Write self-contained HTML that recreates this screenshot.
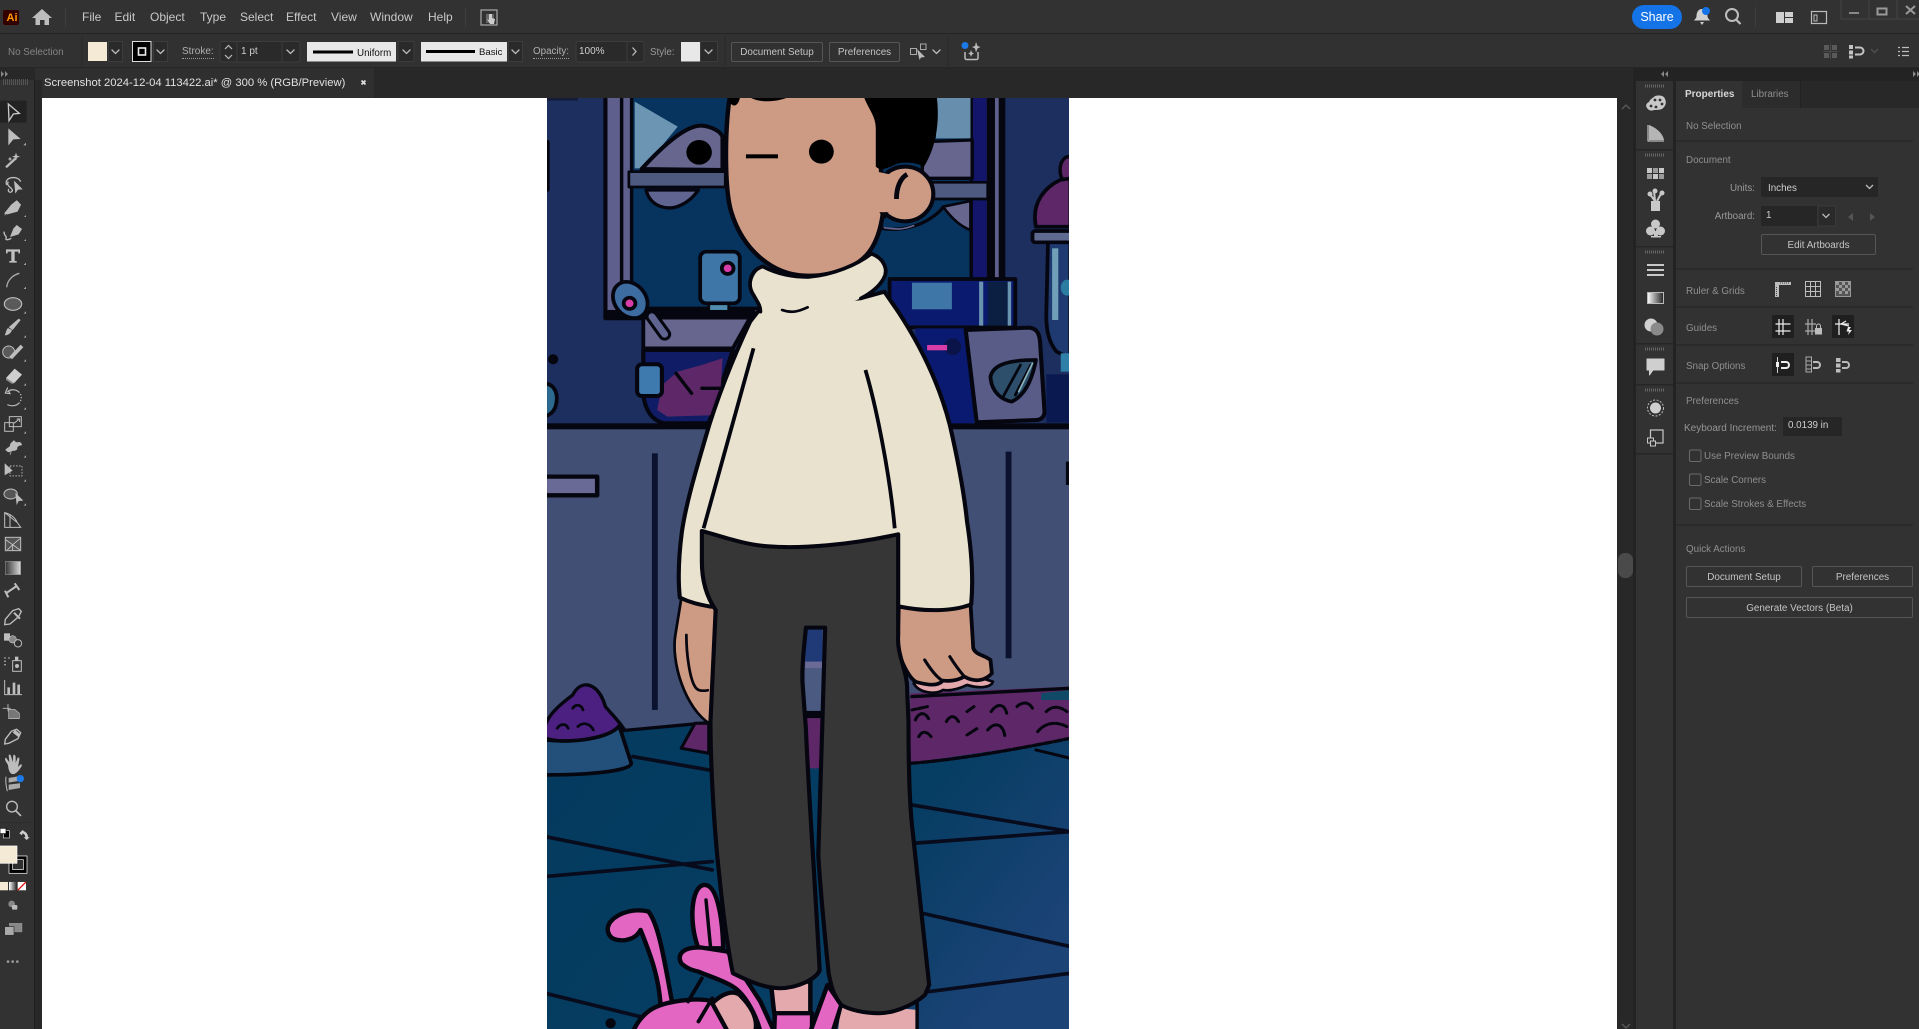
<!DOCTYPE html>
<html><head><meta charset="utf-8"><title>Illustrator</title>
<style>
html,body{margin:0;padding:0;width:1919px;height:1029px;overflow:hidden;background:#323232}
#r{position:relative;width:1919px;height:1029px;overflow:hidden;font-family:"Liberation Sans",sans-serif}
.b{position:absolute}
.t{position:absolute;white-space:nowrap;line-height:14px;height:14px;font-size:9.8px;color:#9a9a9a}
.w{color:#cfcfcf}
.btn{position:absolute;box-sizing:border-box;border:1px solid #565656;border-radius:2px;text-align:center;color:#c4c4c4;font-size:9.9px;white-space:nowrap}
.d{border-bottom:1px dotted #999;line-height:12px;height:12px;font-size:10px}
.m{font-size:12px;color:#c9c9c9}
svg{position:absolute;left:0;top:0}
</style></head><body><div id="r">
<!-- chrome backgrounds -->
<div class="b" style="left:0;top:0;width:1919px;height:34px;background:#323232;border-bottom:1px solid #232323;box-sizing:border-box"></div>
<div class="b" style="left:0;top:34px;width:1919px;height:34px;background:#313131;border-bottom:1px solid #262626;box-sizing:border-box"></div>
<div class="b" style="left:0;top:68px;width:1919px;height:30px;background:#282828"></div>
<div class="b" style="left:35px;top:68px;width:339px;height:30px;background:#2f2f2f"></div>
<div class="b" style="left:0;top:80px;width:34px;height:949px;background:#323232"></div>
<div class="b" style="left:34px;top:80px;width:8px;height:949px;background:#282828;border-left:1px solid #1f1f1f;box-sizing:border-box"></div>
<div class="b" style="left:42px;top:98px;width:1575px;height:931px;background:#fff"></div>
<div class="b" style="left:1617px;top:98px;width:16px;height:931px;background:#282828"></div>
<div class="b" style="left:1618px;top:553px;width:15px;height:25px;border-radius:7px;background:#4a4a4a"></div>
<div class="b" style="left:1633px;top:68px;width:286px;height:961px;background:#232323"></div>
<div class="b" style="left:1636px;top:81px;width:37px;height:948px;background:#323232"></div>
<div class="b" style="left:1676px;top:81px;width:243px;height:27px;background:#282828"></div>
<div class="b" style="left:1676px;top:81px;width:66px;height:27px;background:#323232"></div>
<div class="b" style="left:1742px;top:81px;width:58px;height:27px;background:#2c2c2c;border-right:1px solid #222"></div>
<div class="b" style="left:1676px;top:108px;width:243px;height:921px;background:#323232"></div>
<!-- separators in panel -->
<div class="b" style="left:1676px;top:140px;width:237px;height:2px;background:#2a2a2a"></div>
<div class="b" style="left:1676px;top:268px;width:237px;height:2px;background:#2a2a2a"></div>
<div class="b" style="left:1676px;top:306px;width:237px;height:2px;background:#2a2a2a"></div>
<div class="b" style="left:1676px;top:344px;width:237px;height:2px;background:#2a2a2a"></div>
<div class="b" style="left:1676px;top:382px;width:237px;height:2px;background:#2a2a2a"></div>
<div class="b" style="left:1676px;top:524px;width:237px;height:2px;background:#2a2a2a"></div>

<!-- ARTWORK -->
<svg width="1919" height="1029" viewBox="0 0 1919 1029">
<defs>
<clipPath id="art"><rect x="547" y="98" width="522" height="931"/></clipPath>
<linearGradient id="fl" x1="0" y1="0" x2="1" y2="0.5"><stop offset="0" stop-color="#033a5e"/><stop offset=".65" stop-color="#063d62"/><stop offset="1" stop-color="#1b4376"/></linearGradient>
</defs>
<g clip-path="url(#art)"><g transform="translate(540,95) scale(.3444,.3333)" stroke-linejoin="round" stroke-linecap="round" style="filter:blur(.4px)">
<!-- wall up -->
<rect x="0" y="0" width="1568" height="1000" fill="#1d2f5f"/>
<!-- lower wall -->
<rect x="0" y="990" width="1568" height="930" fill="#414f74"/>
<rect x="0" y="985" width="1568" height="18" fill="#05060f"/>
<!-- floor -->
<path d="M0 1925L260 1905L500 1885L1568 1885L1568 2920L0 2920Z" fill="url(#fl)"/>
<path d="M250 1906L480 1884" stroke="#05060f" stroke-width="10" fill="none"/>
<!-- window -->
<rect x="190" y="-20" width="1155" height="690" fill="#5e5f8c" stroke="#05060f" stroke-width="12"/>
<rect x="232" y="0" width="10" height="665" fill="#05060f"/>
<rect x="1255" y="0" width="42" height="660" fill="#12156a"/>
<rect x="1297" y="0" width="24" height="660" fill="#05060f"/>
<rect x="1332" y="0" width="14" height="660" fill="#05060f"/>
<rect x="266" y="0" width="986" height="640" fill="#07345f" stroke="#05060f" stroke-width="10"/>
<path d="M275 20L400 95L300 220L275 220Z" fill="#6b95b2"/>
<path d="M1150 0L1250 0L1250 130L1150 130Z" fill="#678fad"/>
<path d="M295 222C350 160 420 90 470 92C500 95 525 110 530 125L530 225Z" fill="#66668f" stroke="#05060f" stroke-width="12"/>
<circle cx="462" cy="172" r="37" fill="#000"/>
<path d="M1110 140L1255 135L1255 250L1110 250Z" fill="#66668f" stroke="#05060f" stroke-width="10"/>
<rect x="258" y="230" width="280" height="46" fill="#4f5a80" stroke="#05060f" stroke-width="8"/>
<rect x="1120" y="262" width="180" height="50" fill="#4f5a80" stroke="#05060f" stroke-width="8"/>
<path d="M308 285C320 335 370 350 410 330C435 318 450 300 460 285Z" fill="#5f6490" stroke="#05060f" stroke-width="10"/>
<path d="M1170 335C1195 370 1220 395 1250 405L1250 318Z" fill="#66668f" stroke="#05060f" stroke-width="8"/>
<path d="M995 400C1060 412 1130 385 1170 338" fill="none" stroke="#05060f" stroke-width="10"/>
<path d="M1000 398C1040 405 1060 402 1085 392" fill="none" stroke="#66668f" stroke-width="5"/>
<!-- bottle -->
<rect x="490" y="620" width="58" height="32" fill="#4f8cae" stroke="#05060f" stroke-width="8"/>
<rect x="465" y="470" width="115" height="155" rx="18" fill="#3f76a8" stroke="#05060f" stroke-width="11"/>
<circle cx="545" cy="520" r="17" fill="#d63da6" stroke="#05060f" stroke-width="11"/>
<!-- shelf -->
<rect x="185" y="645" width="440" height="24" fill="#05060f"/>
<path d="M300 668L610 668L560 760L300 760Z" fill="#66668f" stroke="#05060f" stroke-width="11"/>
<path d="M300 765L560 765L490 985L360 985C320 975 305 940 300 900Z" fill="#101d66" stroke="#05060f" stroke-width="12"/>
<path d="M340 945L355 870L400 830L470 810L530 790L520 960L370 965Z" fill="#5e2767"/>
<path d="M395 835L440 895M470 880L520 880" stroke="#05060f" stroke-width="10" fill="none"/>
<rect x="282" y="808" width="72" height="95" rx="14" fill="#3f7aae" stroke="#05060f" stroke-width="12"/>
<path d="M325 665L362 718" stroke="#05060f" stroke-width="38"/>
<path d="M325 665L362 718" stroke="#5f6490" stroke-width="20"/>
<ellipse cx="262" cy="615" rx="46" ry="58" transform="rotate(-35 262 615)" fill="#3d6ca0" stroke="#05060f" stroke-width="11"/>
<circle cx="260" cy="625" r="17" fill="#d63da6" stroke="#05060f" stroke-width="11"/>
<!-- left edge -->
<circle cx="38" cy="793" r="15" fill="#05060f"/>
<path d="M15 865C45 870 55 900 45 935C38 955 25 960 15 965Z" fill="#2d6a90" stroke="#05060f" stroke-width="11"/>
<rect x="14" y="135" width="14" height="155" rx="6" fill="#05060f"/>
<rect x="20" y="5" width="90" height="12" fill="#141c3a"/>
<!-- right books -->
<rect x="1015" y="552" width="365" height="145" fill="#0a1a6e" stroke="#05060f" stroke-width="11"/>
<rect x="1080" y="563" width="116" height="80" fill="#3f76a8"/>
<rect x="1275" y="560" width="12" height="132" fill="#6a93b0"/>
<rect x="1300" y="560" width="58" height="132" fill="#0a1f42"/>
<rect x="1358" y="560" width="10" height="132" fill="#6a93b0"/>
<rect x="1090" y="700" width="170" height="285" fill="#0a1a70"/>
<circle cx="1198" cy="755" r="25" fill="#0b1448"/>
<rect x="1124" y="750" width="58" height="16" fill="#d63da6"/>
<path d="M1236 705L1420 698C1445 700 1450 720 1452 740L1465 950C1465 965 1455 975 1440 975L1268 982Z" fill="#5a5c88" stroke="#05060f" stroke-width="12"/>
<path d="M1308 845C1315 815 1345 795 1440 795C1430 850 1410 900 1370 920C1340 915 1310 890 1308 845Z" fill="#2d4f6c" stroke="#05060f" stroke-width="11"/>
<path d="M1345 905L1395 810M1380 900L1425 810" stroke="#05060f" stroke-width="8"/>
<path d="M1390 890L1430 805" stroke="#8ab0b8" stroke-width="5"/>
<!-- lamp -->
<path d="M1475 440L1540 440L1540 790L1500 770C1475 740 1470 700 1470 660Z" fill="#1e3a70" stroke="#05060f" stroke-width="11"/>
<rect x="1487" y="460" width="18" height="215" fill="#6fa0b8"/>
<ellipse cx="1530" cy="578" rx="18" ry="24" fill="#2a7ca0"/>
<rect x="1512" y="775" width="30" height="55" fill="#2f80a8"/>
<rect x="1470" y="838" width="80" height="145" fill="#0a1a50"/>
<ellipse cx="1535" cy="225" rx="25" ry="40" fill="#5e2767" stroke="#05060f" stroke-width="10"/>
<path d="M1440 395C1425 320 1470 275 1510 255L1540 250L1540 395Z" fill="#5e2767" stroke="#05060f" stroke-width="11"/>
<rect x="1430" y="408" width="120" height="34" rx="8" fill="#5f6a90" stroke="#05060f" stroke-width="11"/>
<!-- lower wall bits -->
<rect x="14" y="1145" width="152" height="56" fill="#6a6a96" stroke="#05060f" stroke-width="13"/>
<rect x="325" y="1075" width="17" height="770" fill="#0a1230"/>
<rect x="1352" y="1070" width="17" height="620" fill="#0a1230"/>
<rect x="1527" y="1100" width="16" height="70" fill="#05060f"/>
<!-- rug right -->
<path d="M1075 1795L1540 1775L1540 1935C1400 1955 1200 1985 1075 2005Z" fill="#5e2767"/>
<path d="M1455 1795L1540 1785L1540 1815L1455 1815Z" fill="#104a66"/>
<path d="M1080 1805L1540 1780" stroke="#05060f" stroke-width="10" fill="none"/>
<path d="M1078 2005C1200 1995 1350 1970 1540 1930" stroke="#05060f" stroke-width="10" fill="none" stroke-dasharray="22 8"/>
<path d="M1080 1845L1125 1835M1090 1875C1100 1850 1120 1850 1130 1875M1310 1850C1330 1820 1350 1830 1355 1855M1300 1905C1320 1880 1345 1885 1350 1925M1445 1910C1470 1880 1500 1880 1530 1895M1180 1880C1190 1860 1205 1860 1215 1880M1385 1835C1400 1820 1420 1820 1430 1840M1470 1850C1490 1830 1510 1835 1530 1850M1240 1850L1260 1835M1100 1925C1110 1905 1125 1910 1135 1925M1240 1920L1270 1900" stroke="#05060f" stroke-width="9" fill="none" stroke-dasharray="14 6"/>
<path d="M1440 1965L1540 1990" stroke="#05060f" stroke-width="9" fill="none"/>
<!-- rug left -->
<path d="M490 1885L450 1885L410 1960L490 1975Z" fill="#5e2767" stroke="#05060f" stroke-width="9"/>
<!-- leg gap -->
<rect x="770" y="1590" width="50" height="110" fill="#203a78"/>
<rect x="770" y="1700" width="50" height="20" fill="#6a6a96"/>
<rect x="770" y="1720" width="50" height="128" fill="#4a5a80"/>
<rect x="770" y="1848" width="50" height="22" fill="#05060f"/>
<path d="M770 1870L830 1870L800 2025Z" fill="#5e2767"/>
<rect x="770" y="1870" width="50" height="150" fill="#5e2767"/>
<!-- bowl -->
<path d="M15 1890C30 1850 70 1820 95 1800C105 1780 120 1768 138 1770C165 1775 180 1800 190 1835C210 1860 235 1885 245 1905C200 1945 60 1945 15 1930Z" fill="#4b2080" stroke="#05060f" stroke-width="10"/>
<path d="M50 1900C60 1885 75 1885 82 1900M110 1895C125 1880 145 1885 155 1905M95 1840C105 1825 120 1830 125 1845" stroke="#05060f" stroke-width="8" fill="none"/>
<path d="M230 1893L265 2005C265 2025 170 2040 15 2040L15 1935C100 1945 200 1930 230 1893Z" fill="#23507a" stroke="#05060f" stroke-width="11"/>
<!-- floor lines -->
<g stroke="#070b1c" stroke-width="11" fill="none">
<path d="M270 1985L490 2025M15 2225L500 2325M15 2345L500 2300M1080 2130L1540 2210M1085 2245L1540 2210M1110 2455L1540 2555M1130 2690L1540 2635M15 2695L290 2765"/>
</g>
<!-- slippers -->
<g stroke="#05060f" stroke-width="13">
<path d="M350 2730C345 2650 325 2590 292 2505C280 2530 250 2540 225 2535C195 2530 190 2500 205 2480C230 2450 280 2440 315 2450C345 2490 360 2590 385 2730Z" fill="#e366c3"/>
<path d="M460 2560C430 2480 440 2370 478 2370C515 2370 530 2470 532 2560Z" fill="#e366c3"/>
<path d="M482 2415L495 2555" fill="none" stroke-width="10"/>
<path d="M270 2810C300 2740 350 2722 430 2715C520 2705 640 2760 690 2810Z" fill="#e366c3"/>
<path d="M410 2605C395 2575 420 2555 470 2558L545 2570L640 2720L680 2810L640 2810C630 2770 600 2700 560 2675C530 2655 480 2640 460 2630C440 2625 425 2620 410 2605Z" fill="#e366c3"/>
<path d="M500 2725C530 2695 560 2685 580 2700C610 2730 635 2770 625 2810L545 2810Z" fill="#e4a9ac"/>
<path d="M670 2660L785 2660L785 2755L680 2755Z" fill="#e4a9ac"/>
<path d="M682 2755L790 2755L790 2810L680 2810Z" fill="#e366c3"/>
<path d="M835 2670L875 2730L850 2810L785 2810Z" fill="#e366c3"/>
<path d="M875 2725L1095 2745L1100 2810L865 2810Z" fill="#e4a9ac" stroke-width="0"/>
<path d="M1095 2725L1095 2810M875 2730L855 2810" fill="none" stroke-width="10"/>
<path d="M430 2720L470 2650M460 2780L500 2710" fill="none" stroke-width="11"/>
</g>
<circle cx="205" cy="2785" r="15" fill="#05060f"/>
<!-- left hand -->
<path d="M410 1512L393 1620C380 1700 420 1840 495 1888L530 1888L530 1530Z" fill="#cd9a84" stroke="#05060f" stroke-width="8"/>
<path d="M425 1620C425 1680 435 1750 450 1775C458 1790 475 1788 487 1786" fill="none" stroke="#05060f" stroke-width="8"/>
<!-- right hand -->
<path d="M1085 1765C1100 1795 1150 1800 1170 1785C1200 1790 1230 1775 1240 1770C1270 1780 1310 1780 1315 1760L1220 1730L1090 1750Z" fill="#e4a9ac" stroke="#05060f" stroke-width="8"/>
<path d="M1042 1530L1038 1650C1045 1700 1075 1755 1095 1762C1125 1770 1155 1775 1170 1757C1195 1760 1215 1755 1232 1745C1265 1765 1295 1755 1312 1735L1308 1695C1290 1680 1265 1680 1258 1660L1250 1525Z" fill="#cd9a84" stroke="#05060f" stroke-width="11"/>
<path d="M1117 1695C1135 1725 1150 1745 1168 1757M1190 1685C1205 1710 1220 1730 1232 1745" fill="none" stroke="#05060f" stroke-width="9"/>
<!-- sweater -->
<path d="M640 640L610 680C560 790 510 920 480 1030C455 1120 425 1220 412 1310C402 1390 400 1450 406 1508C440 1525 470 1530 495 1535L1045 1535C1115 1550 1200 1550 1252 1528C1258 1460 1255 1380 1240 1280C1230 1180 1210 1080 1190 990C1160 870 1110 760 1040 650L1000 590L930 610Z" fill="#e9e2cf" stroke="#05060f" stroke-width="12"/>
<!-- head -->
<circle cx="1060" cy="297" r="82" fill="#cd9a84" stroke="#05060f" stroke-width="12"/>
<path d="M555 -20L990 -20L990 215L995 360C985 430 960 490 900 515C860 535 810 545 770 542C680 540 590 470 555 350C535 280 535 90 555 -20Z" fill="#cd9a84" stroke="#05060f" stroke-width="13"/>
<path d="M955 225L1025 240L1035 345L1000 352L960 350Z" fill="#cd9a84"/>
<path d="M985 352L1003 372L1012 352Z" fill="#05060f"/>
<path d="M1066 238C1045 250 1035 280 1035 312" fill="none" stroke="#05060f" stroke-width="14" stroke-linecap="butt"/>
<path d="M935 -10C950 40 975 60 975 100L975 215C990 230 1005 220 1040 205C1075 200 1095 205 1115 215C1145 165 1165 90 1150 -10Z" fill="#000"/>
<path d="M595 -5C620 25 680 25 725 5L725 -5Z M545 -5L550 20C560 40 580 35 582 -5Z" fill="#000"/>
<circle cx="817" cy="170" r="36" fill="#000"/>
<rect x="598" y="178" width="93" height="12" fill="#000"/>
<!-- collar -->
<path d="M648 514C620 530 605 570 620 600C630 625 642 635 640 650C720 680 850 650 930 610C960 595 985 570 998 545C1008 515 990 480 962 476C900 520 840 545 770 548C720 548 680 530 648 514Z" fill="#e9e2cf" stroke="none"/>
<path d="M648 514C610 525 600 570 620 600C630 620 640 630 640 650" fill="none" stroke="#05060f" stroke-width="11"/>
<path d="M650 516C680 532 720 546 780 546C850 540 920 510 962 476C1000 490 1012 525 998 550C985 575 960 595 932 610" fill="none" stroke="#05060f" stroke-width="11"/>
<path d="M703 645C730 655 750 650 777 637" fill="none" stroke="#05060f" stroke-width="8"/>
<path d="M620 760L475 1300" fill="none" stroke="#05060f" stroke-width="11" stroke-linecap="butt"/>
<path d="M945 825C975 930 1015 1130 1030 1300" fill="none" stroke="#05060f" stroke-width="11" stroke-linecap="butt"/>
<!-- pants -->
<path d="M470 1308C530 1325 590 1348 660 1354C760 1362 900 1350 1040 1318L1040 1620C1035 1680 1068 1730 1066 1785L1070 1880C1070 2000 1072 2110 1080 2190C1090 2300 1105 2420 1130 2670L1118 2700C1080 2735 1020 2755 985 2755C940 2755 900 2745 875 2730C850 2700 845 2670 838 2635C825 2500 815 2400 808 2280L820 1880L828 1598L772 1598C768 1650 760 1700 762 1760L772 1900C780 2100 795 2300 812 2625C805 2650 750 2680 695 2680C640 2678 590 2650 560 2635C545 2560 530 2440 520 2335C505 2200 495 2000 495 1880L510 1545C480 1500 470 1450 470 1400Z" fill="#363636" stroke="#05060f" stroke-width="12"/>
</g></g>

<!-- UI GRAPHICS -->
<!-- top bar -->
<rect x="3" y="10" width="16" height="15" rx="2" fill="#330000"/>
<path d="M42 9L52 18H49V25H44.5V20H40V25H35.5V18H32Z" fill="#bdbdbd"/>
<rect x="65" y="7" width="1" height="20" fill="#3e3e3e"/>
<rect x="465" y="7" width="1" height="20" fill="#3e3e3e"/>
<rect x="481" y="10" width="16" height="15" fill="none" stroke="#aaa" stroke-width="1.2"/>
<path d="M486 14h8v9h-8z" fill="#666"/><path d="M489 14v6l-2 -1 3 5h4l1 -5 -3 -1v-4z" fill="#ccc"/>
<!-- right top -->
<path d="M1702 9c-4 0-5.500 4-5.500 7 0 2-1.500 3-2.500 4.500h16c-1-1.500-2.500-2.500-2.500-4.500 0-3-1.500-7-5.500-7zM1700 22h4l-2 3z" fill="#cfcfcf"/>
<circle cx="1706" cy="11" r="4" fill="#1473e6"/>
<circle cx="1732" cy="15" r="6" fill="none" stroke="#bdbdbd" stroke-width="2"/><path d="M1736 19.500l4.500 4.500" stroke="#bdbdbd" stroke-width="2.200"/>
<rect x="1755" y="7" width="1" height="20" fill="#3e3e3e"/>
<path d="M1776 12h8v11h-8zM1785 12h8v5h-8zM1785 18h8v5h-8z" fill="#cfcfcf"/>
<rect x="1811.500" y="11.500" width="15" height="12" fill="none" stroke="#bbb" stroke-width="1.200"/><rect x="1814" y="15" width="3" height="6" fill="none" stroke="#bbb"/>
<path d="M1841 0v19h78M1869 0v19M1897 0v19" fill="none" stroke="#444"/>
<rect x="1849" y="12" width="10" height="2" fill="#888"/>
<rect x="1877.500" y="8.500" width="9" height="6" fill="none" stroke="#999" stroke-width="2"/>
<path d="M1906 6l9 8M1915 6l-9 8" stroke="#999" stroke-width="2"/>
<!-- options bar -->
<rect x="88" y="42" width="19" height="19" fill="#f4ead5"/>
<rect x="108.500" y="41.500" width="14" height="20" fill="#2a2a2a" stroke="#3c3c3c"/>
<rect x="132.500" y="41.500" width="18.500" height="20" fill="#000" stroke="#ddd"/>
<rect x="138.500" y="48" width="7" height="7" fill="none" stroke="#eee" stroke-width="1.600"/>
<rect x="153.500" y="41.500" width="14" height="20" fill="#2a2a2a" stroke="#3c3c3c"/>
<rect x="220" y="41.500" width="80" height="20.500" rx="2" fill="#2a2a2a" stroke="#3c3c3c"/>
<path d="M237 42v20M282 42v20" stroke="#3c3c3c"/>
<path d="M225 49l3.500-3.500 3.500 3.500M225 55l3.500 3.500 3.500-3.500" fill="none" stroke="#bbb" stroke-width="1.200"/>
<rect x="307" y="42" width="89" height="19.500" fill="#e8e8e8"/>
<rect x="313" y="50.500" width="40" height="3" fill="#000"/>
<rect x="398" y="41.500" width="16" height="20" fill="#2a2a2a" stroke="#3c3c3c"/>
<rect x="421" y="42" width="86" height="19.500" fill="#e8e8e8"/>
<rect x="426" y="50" width="49" height="3" fill="#000"/>
<rect x="508.500" y="41.500" width="14" height="20" fill="#2a2a2a" stroke="#3c3c3c"/>
<rect x="576" y="41.500" width="68" height="20.500" rx="2" fill="#2a2a2a" stroke="#3c3c3c"/><path d="M627 42v20" stroke="#3c3c3c"/>
<path d="M632.500 47.500l3.500 4-3.500 4" fill="none" stroke="#bbb" stroke-width="1.300"/>
<rect x="681" y="42" width="19" height="19.500" fill="#e8e8e8"/>
<rect x="700.500" y="41.500" width="17" height="20" fill="#2a2a2a" stroke="#3c3c3c"/>
<path d="M725 36v30M948 36v30M82 36v30" stroke="#2b2b2b" stroke-width="1.300"/>
<g fill="none" stroke="#bbb" stroke-width="1.300" stroke-linecap="round">
<path d="M112 50l3.500 3.500 3.500-3.500M157 50l3.500 3.500 3.500-3.500M287 50l3.500 3.500 3.500-3.500M403 50l3.500 3.500 3.500-3.500M512 50l3.500 3.500 3.500-3.500M705 50l3.500 3.500 3.500-3.500M933 50l3.500 3.500 3.500-3.500"/>
</g>
<rect x="910.500" y="48.500" width="6" height="6" fill="none" stroke="#aaa"/>
<rect x="920.500" y="44" width="5.500" height="5.500" fill="none" stroke="#aaa"/>
<path d="M917 49l8 8-4 .5-1.500 2.500z" fill="#bbb"/>
<path d="M965 52v6a1.500 1.500 0 0 0 1.500 1.500h10a1.500 1.500 0 0 0 1.500-1.500v-6" fill="none" stroke="#bbb" stroke-width="1.500"/>
<circle cx="965" cy="45.500" r="3.500" fill="#1c7ae8"/>
<path d="M976 42l1.500 4 3 1-3 1.500-1.500 4-1-4-3-1.500 3-1zM971 50l1 2.500 2 1-2 1-1 2.500-.8-2.500-2-1 2-1z" fill="#bbb"/>
<g fill="#5a5a5a"><rect x="1824" y="45" width="5" height="5"/><rect x="1832" y="45" width="5" height="5"/><rect x="1824" y="53" width="5" height="5"/><rect x="1832" y="53" width="5" height="5"/></g>
<path d="M1830.500 44v15M1823 51.500h15" stroke="#4a4a4a"/>
<g fill="#c4c4c4"><rect x="1849" y="45" width="4" height="4"/><rect x="1849" y="50.500" width="4" height="4"/><rect x="1849" y="55.500" width="4" height="3"/></g>
<path d="M1855 47.500h5a3.500 3.500 0 0 1 0 7h-5" fill="none" stroke="#c4c4c4" stroke-width="2"/>
<path d="M1871 49l3.500 3.500 3.500-3.500" fill="none" stroke="#555" stroke-width="1.200"/>
<path d="M1902 47.500h7M1902 51.500h7M1902 55.500h7M1898 47.500h2M1898 51.500h2M1898 55.500h2" stroke="#bdbdbd" stroke-width="1.200"/>
<!-- tab close -->
<path d="M361.500 80.500l4 4M365.500 80.500l-4 4" stroke="#ddd" stroke-width="1.800"/>
<!-- collapse ticks -->
<path d="M1664 71l-3 3 3 3zM1668 71l-3 3 3 3z" fill="#888"/>
<path d="M1913 71l3 3-3 3zM1917 71l3 3-3 3zM1 71l3 3-3 3zM5 71l3 3-3 3z" fill="#888"/>
<path d="M1622 109l4-4 4 4" fill="none" stroke="#5a5a5a" stroke-width="1.300"/>
<path d="M1622 1024l4 4 4-4" fill="none" stroke="#5a5a5a" stroke-width="1.300"/>

<!-- left rail tools : zoom 5 coordinates -->
<path d="M3 82h25" stroke="#555" stroke-width="6" stroke-dasharray="1 1"/>
<g transform="translate(0,90) scale(.3333)">
<rect x="0" y="32" width="80" height="66" rx="4" fill="#222"/>
<path d="M25 42L58 70 40 72 27 92Z" fill="none" stroke="#c8c8c8" stroke-width="4"/>
<path d="M25 115L62 147 40 148 25 166Z" fill="#bdbdbd"/>
<path d="M18 232L46 206" stroke="#bdbdbd" stroke-width="7"/><path d="M48 188l3 9 9 3-9 3-3 9-3-9-9-3 9-3zM30 200l2 5 5 2-5 2-2 5-2-5-5-2 5-2z" fill="#bdbdbd"/>
<path d="M20 285c-10-25 35-30 42-10M25 275c-10 15 20 20 10 30-6 5-14-3-8-8" fill="none" stroke="#bdbdbd" stroke-width="4"/><path d="M42 272l26 26-14 1-8 12z" fill="#bdbdbd"/>
<path d="M50 332l12 12-10 20-30 8-8-2 20-25zM14 376l16-16" fill="#bdbdbd" stroke="#bdbdbd" stroke-width="2"/>
<path d="M50 405l16 12-10 16-26 8 10-25z" fill="#bdbdbd"/><path d="M12 425c0 15 10 12 6 20-3 6 8 5 16 0" fill="none" stroke="#bdbdbd" stroke-width="4"/>
<path d="M18 478h42v12h-5v-5H44v28h6v5H28v-5h6V485H23v5h-5z" fill="#c0c0c0"/>
<path d="M20 592c2-20 16-36 38-42" fill="none" stroke="#aaa" stroke-width="4"/>
<ellipse cx="39" cy="642" rx="26" ry="19" fill="#5a5a5a" stroke="#bdbdbd" stroke-width="3.500"/>
<path d="M62 690L38 720 26 712 56 686z" fill="#bdbdbd"/><path d="M36 720c-4 12-14 16-22 16 4-8 4-16 10-22z" fill="#bdbdbd"/>
<circle cx="26" cy="786" r="18" fill="#5a5a5a" stroke="#bdbdbd" stroke-width="3"/><path d="M70 772L36 808 28 800 62 764z" fill="#bdbdbd"/>
<path d="M44 836l22 18-24 26-24-16z" fill="#cfcfcf"/><path d="M18 864l24 16-6 2-18-12z" fill="#888"/>
<path d="M22 895l-6 14 14 2zM22 905c20-14 42 0 42 18 0 18-22 32-44 20" fill="none" stroke="#bdbdbd" stroke-width="3.500" stroke-dasharray="40 5 4 5 4 5 4 5"/>
<rect x="14" y="998" width="26" height="26" fill="none" stroke="#bdbdbd" stroke-width="3"/><rect x="28" y="980" width="36" height="30" fill="none" stroke="#bdbdbd" stroke-width="3"/><path d="M42 1000l16-13M50 987h9v9" fill="none" stroke="#bdbdbd" stroke-width="3"/>
<path d="M16 1080c6-8 14-8 14-14 0-8 8-10 12-16 3 6 8 8 14 6 6 0 10 4 10 10-8 0-16 4-14 12-8 8-14 2-22 8-4 3-10-2-14-6zM30 1095l8-22" fill="#bdbdbd"/><path d="M30 1095l8-22" stroke="#bdbdbd" stroke-width="2"/>
<path d="M14 1120l24 22-24 14z" fill="#bdbdbd"/><rect x="30" y="1128" width="36" height="30" fill="none" stroke="#bdbdbd" stroke-width="2.500" stroke-dasharray="5 4"/>
<ellipse cx="32" cy="1212" rx="20" ry="15" fill="#555" stroke="#bdbdbd" stroke-width="3"/><path d="M46 1208l24 24-14 1-6 12z" fill="#bdbdbd"/>
<g fill="#a8a8a8"><path d="M78 158v8h-8zM78 375v6h-6zM78 447v6h-6zM78 518v7h-7zM78 590v7h-7zM78 664v7h-7zM78 736v7h-7zM78 808v7h-7zM78 880v7h-7zM78 952v7h-7zM78 1024v7h-7zM78 1096v7h-7zM78 1168v7h-7zM78 1240v7h-7z"/></g>
</g>
<!-- zoom 6 coordinates -->
<g transform="translate(0,500) scale(.3333)">
<path d="M14 38v44h48l-10-14C44 50 30 42 14 38zM14 38l38 30M30 42v40" fill="none" stroke="#bdbdbd" stroke-width="3"/>
<rect x="16" y="112" width="46" height="40" fill="#555" stroke="#bdbdbd" stroke-width="3"/><path d="M18 120l20 14 22-18M38 134v18M22 150l16-16 22 16" fill="none" stroke="#ccc" stroke-width="2.500"/>
<defs><linearGradient id="gg"><stop offset="0" stop-color="#333"/><stop offset="1" stop-color="#ddd"/></linearGradient></defs>
<rect x="16" y="184" width="46" height="40" fill="url(#gg)" stroke="#888" stroke-width="2"/>
<path d="M18 280L50 258M15 272l10 20M44 250l14 20" stroke="#bdbdbd" stroke-width="6" fill="none"/>
<path d="M56 326l8 8-8 16-26 22-16 2 2-16 22-26z" fill="none" stroke="#bdbdbd" stroke-width="4"/><path d="M42 338l18 18" stroke="#bdbdbd" stroke-width="6"/>
<rect x="12" y="400" width="18" height="22" fill="#bdbdbd"/><circle cx="38" cy="418" r="11" fill="#888" stroke="#bdbdbd" stroke-width="2"/><circle cx="54" cy="430" r="11" fill="#2e2e2e" stroke="#bdbdbd" stroke-width="3"/>
<rect x="38" y="482" width="26" height="32" fill="none" stroke="#bdbdbd" stroke-width="3"/><circle cx="51" cy="498" r="6" fill="#bdbdbd"/><rect x="45" y="470" width="10" height="12" fill="#bdbdbd"/>
<path d="M12 474h6M24 474h6M12 484h6M12 494h6" stroke="#999" stroke-width="4"/>
<path d="M14 540v44h52" fill="none" stroke="#bdbdbd" stroke-width="3"/><path d="M22 562h8v20h-8zM38 548h8v34h-8zM52 554h8v28h-8z" fill="#bdbdbd"/>
<path d="M8 625h24M24 612v22" stroke="#bdbdbd" stroke-width="2.500"/><path d="M26 628h18l14 12v16H26z" fill="#777" stroke="#bdbdbd" stroke-width="2"/>
<path d="M50 688l12 10-8 18-28 14-12 2 2-14 18-24z" fill="none" stroke="#bdbdbd" stroke-width="4"/><path d="M46 690l16 14-6 8-18-14z" fill="#bdbdbd"/>
<path d="M24 795c-8-12-12-20-6-22l10 14-2-22c4-4 7 2 8 6l4 16 2-22c5-3 7 3 7 8v16l6-16c4-2 6 2 5 6l-4 22 8-8c4 0 5 3 2 7-6 10-14 20-22 22-10 2-16-6-18-27z" fill="#bdbdbd"/>
<path d="M18 830c-2 14 0 28 4 44" fill="none" stroke="#bdbdbd" stroke-width="3"/>
<path d="M26 834l34-6v14l-34 6zM26 854l34-4v14l-34 6z" fill="#aaa"/><circle cx="61" cy="836" r="11" fill="#1c7ae8"/>
<circle cx="36" cy="920" r="16" fill="none" stroke="#bdbdbd" stroke-width="4"/><path d="M47 932l16 16" stroke="#bdbdbd" stroke-width="5"/>
<rect x="0" y="967" width="90" height="2" fill="#2a2a2a"/>
<rect x="10" y="992" width="18" height="22" fill="#000" stroke="#ddd" stroke-width="2"/>
<rect x="0" y="985" width="18" height="16" fill="#fff" stroke="#000" stroke-width="2"/>
<path d="M58 1000l10-10 4 4c6 2 12 8 12 18l5 0-9 8-9-8 5 0c0-6-3-10-8-12l-2 6z" fill="#cfcfcf"/>
<rect x="27" y="1068" width="54" height="52" fill="#000" stroke="#fff" stroke-width="2"/><rect x="38" y="1079" width="32" height="30" fill="#2e2e2e" stroke="#fff" stroke-width="2"/>
<rect x="-4" y="1038" width="55" height="52" fill="#f4ead5" stroke="#fff" stroke-width="2"/>
<rect x="0" y="1146" width="24" height="25" fill="#f4ead5"/>
<defs><linearGradient id="gw"><stop offset="0" stop-color="#fff"/><stop offset="1" stop-color="#222"/></linearGradient></defs>
<rect x="27" y="1146" width="24" height="25" fill="url(#gw)"/>
<rect x="53" y="1146" width="25" height="25" fill="#fff"/><path d="M53 1171l25-25" stroke="#e01010" stroke-width="4"/>
<circle cx="35" cy="1212" r="10" fill="#888"/><rect x="36" y="1215" width="16" height="14" rx="3" fill="#bbb"/>
<rect x="28" y="1270" width="38" height="26" fill="#888" stroke="#aaa"/><rect x="14" y="1280" width="28" height="26" fill="#aaa" stroke="#2e2e2e" stroke-width="2"/>
<circle cx="24" cy="1385" r="4" fill="#999"/><circle cx="38" cy="1385" r="4" fill="#999"/><circle cx="52" cy="1385" r="4" fill="#999"/>
</g>

<!-- dock -->
<g fill="#262626"><rect x="1636" y="149" width="37" height="1.500"/><rect x="1636" y="246" width="37" height="1.500"/><rect x="1636" y="343" width="37" height="1.500"/><rect x="1636" y="384" width="37" height="1.500"/><rect x="1636" y="453" width="37" height="1.500"/></g>
<g stroke="#666" stroke-width="3" stroke-dasharray="1 1"><path d="M1645 86h20M1645 155h20M1645 252h20M1645 349h20M1645 390h20"/></g>
<g fill="#c8c8c8">
<path d="M1647 108c-2-3 0-5 2-6 1-3 4-4 6-6 3-1 9-1 10 3 2 4 0 8-3 10-3 1-6 1-8 1-2 1-5 1-7-2z"/>
<g fill="#323232"><circle cx="1655" cy="100" r="1.400"/><circle cx="1660" cy="100" r="1.400"/><circle cx="1662" cy="104" r="1.400"/><circle cx="1651" cy="106" r="1.400"/><circle cx="1656" cy="107" r="1.400"/></g>
<path d="M1649 125c8 3 14 9 15 15h-15z" fill="#b5b5b5"/>
<path d="M1648 125v16h16" fill="none" stroke="#ddd"/>
<rect x="1647" y="168" width="5" height="5"/><rect x="1653" y="168" width="5" height="5" fill="#9a9a9a"/><rect x="1659" y="168" width="5" height="5"/>
<rect x="1647" y="174" width="5" height="5" fill="#9a9a9a"/><rect x="1653" y="174" width="5" height="5"/><rect x="1659" y="174" width="5" height="5" fill="#9a9a9a"/>
<rect x="1651" y="201" width="9" height="10"/><path d="M1655 201l-1-10M1655 201l-6-8M1657 201l5-9" stroke="#c8c8c8" stroke-width="2"/><circle cx="1650" cy="194" r="2.500"/><circle cx="1655" cy="191" r="2.500"/><circle cx="1662" cy="193" r="2.500"/>
<circle cx="1655.500" cy="224" r="4.500"/><circle cx="1650.500" cy="231" r="4.500"/><circle cx="1660.500" cy="231" r="4.500"/><path d="M1654 231h3l1 5h3v1.500h-10V236h3z"/>
<rect x="1647" y="264" width="17" height="2"/><rect x="1647" y="269" width="17" height="2"/><rect x="1647" y="274" width="17" height="2"/>
</g>
<rect x="1647.500" y="292.500" width="16" height="11" fill="url(#gw)" stroke="#bbb"/>
<circle cx="1651" cy="325" r="6.500" fill="#d0d0d0"/><circle cx="1657" cy="329" r="6.500" fill="#8a8a8a"/>
<path d="M1647 359h17v11h-11l-3.500 5v-5h-2.500z" fill="#cfcfcf" stroke="#cfcfcf" stroke-linejoin="round"/>
<circle cx="1655.500" cy="408" r="5.500" fill="#cfcfcf"/><circle cx="1655.500" cy="408" r="8" fill="none" stroke="#bbb" stroke-dasharray="2 1.500"/>
<rect x="1650.500" y="430" width="12.500" height="13" fill="none" stroke="#c8c8c8" stroke-width="1.200"/>
<rect x="1647.500" y="438" width="6" height="5" fill="#323232" stroke="#c8c8c8"/><rect x="1650.500" y="441" width="5" height="5" fill="#323232" stroke="#c8c8c8"/>

<!-- panel controls -->
<rect x="1761" y="177" width="117" height="20" rx="1" fill="#262626"/>
<path d="M1866 185l3.500 3.500 3.500-3.500" fill="none" stroke="#bbb" stroke-width="1.300"/>
<rect x="1761" y="206" width="56" height="20" fill="#262626"/><rect x="1818" y="206" width="17.500" height="20" fill="#2a2a2a" stroke="#3a3a3a"/>
<path d="M1822.500 214l3.500 3.500 3.500-3.500" fill="none" stroke="#bbb" stroke-width="1.300"/>
<path d="M1853 213l-5 4 5 4zM1870 213l5 4-5 4z" fill="#555"/>
<!-- ruler & grids -->
<g>
<path d="M1775 282h16v3h-12v12h-4z" fill="#bdbdbd"/><path d="M1780 283h10M1776.500 287v9" stroke="#444" stroke-width="1" stroke-dasharray="1 1"/>
<path d="M1805.500 281.500h15v15h-15zM1810.500 281.500v15M1815.500 281.500v15M1805.500 286.500h15M1805.500 291.500h15" fill="none" stroke="#bdbdbd"/>
<rect x="1835.500" y="281.500" width="15" height="15" fill="#555" stroke="#999"/>
<path d="M1836 282h3v3h-3zM1842 282h3v3h-3zM1848 282h2v3h-2zM1839 285h3v3h-3zM1845 285h3v3h-3zM1836 288h3v3h-3zM1842 288h3v3h-3zM1848 288h2v3h-2zM1839 291h3v3h-3zM1845 291h3v3h-3z" fill="#999"/>
</g>
<!-- guides -->
<rect x="1772" y="315" width="22" height="23" rx="1" fill="#1f1f1f"/>
<path d="M1779 319v16M1783 319v16M1775.500 324h15M1775.500 331h15" stroke="#eee" stroke-width="1.200"/>
<path d="M1808 319v16M1812 319v16M1805 324h11M1805 331h11" stroke="#aaa" stroke-width="1.200"/>
<rect x="1815" y="328" width="7" height="6.500" fill="#bdbdbd"/><path d="M1816.500 328v-2a2 2 0 0 1 4 0v2" fill="none" stroke="#bdbdbd"/>
<rect x="1832" y="315" width="22" height="23" rx="1" fill="#1f1f1f"/>
<path d="M1839 319v16M1835 324h14M1849 326l-8-2 5-3" stroke="#eee" stroke-width="1.200" fill="none"/><path d="M1848 327l3 0-2 3 3 0-4 5 1-3.500h-2.500z" fill="#eee"/>
<!-- snap -->
<rect x="1772" y="353" width="22" height="23" rx="1" fill="#1f1f1f"/>
<path d="M1777.500 357v16" stroke="#ccc"/><rect x="1776" y="362" width="3" height="5" fill="#eee"/>
<path d="M1781 362h5a3 3 0 0 1 0 6h-5" fill="none" stroke="#eee" stroke-width="2"/>
<rect x="1806" y="357" width="5.500" height="15" fill="none" stroke="#aaa"/><path d="M1806 361h5.500M1806 365h5.500M1806 369h5.500" stroke="#aaa"/>
<path d="M1813 362h4a3 3 0 0 1 0 6h-4" fill="none" stroke="#bbb" stroke-width="2"/>
<g fill="#bdbdbd"><rect x="1836" y="358" width="4.500" height="4"/><rect x="1836" y="363.500" width="4.500" height="4"/><rect x="1836" y="369" width="4.500" height="3.500"/></g>
<path d="M1842 362h4a3 3 0 0 1 0 6h-4" fill="none" stroke="#bbb" stroke-width="2"/>
<!-- keyboard input -->
<rect x="1783" y="417" width="59" height="19" fill="#262626"/>
<!-- checkboxes -->
<g fill="none" stroke="#6a6a6a" stroke-width="1"><rect x="1689.500" y="450" width="11.500" height="11.500" rx="1.500"/><rect x="1689.500" y="474" width="11.500" height="11.500" rx="1.500"/><rect x="1689.500" y="498" width="11.500" height="11.500" rx="1.500"/></g>
</svg>

<!-- TEXT -->
<div class="t" style="left:5px;top:11px;width:14px;text-align:center;font-size:11px;font-weight:bold;color:#ff9a00">Ai</div>
<div class="t m" style="left:82px;top:10px">File</div>
<div class="t m" style="left:114.500px;top:10px">Edit</div>
<div class="t m" style="left:150px;top:10px">Object</div>
<div class="t m" style="left:200px;top:10px">Type</div>
<div class="t m" style="left:240px;top:10px">Select</div>
<div class="t m" style="left:286px;top:10px">Effect</div>
<div class="t m" style="left:331px;top:10px">View</div>
<div class="t m" style="left:370px;top:10px">Window</div>
<div class="t m" style="left:428px;top:10px">Help</div>
<div class="b" style="left:1632px;top:5px;width:50px;height:24px;border-radius:12px;background:#1473e6;color:#fff;font-size:12.500px;line-height:24px;text-align:center">Share</div>

<div class="t" style="left:8px;top:46px;color:#858585">No Selection</div>
<div class="t d" style="left:182px;top:46px;color:#b0b0b0">Stroke:</div>
<div class="t w" style="left:241px;top:45px;font-size:10px">1 pt</div>
<div class="t" style="left:357px;top:47px;color:#111">Uniform</div>
<div class="t" style="left:479px;top:46px;color:#111;font-size:9.600px">Basic</div>
<div class="t d" style="left:533px;top:46px;color:#b0b0b0;font-size:9.800px">Opacity:</div>
<div class="t w" style="left:579px;top:45px;font-size:10px">100%</div>
<div class="t" style="left:650px;top:46px;color:#9a9a9a">Style:</div>
<div class="btn" style="left:731px;top:42px;width:92px;height:20px;line-height:20px">Document Setup</div>
<div class="btn" style="left:829px;top:42px;width:71px;height:20px;line-height:20px">Preferences</div>

<div class="t" style="left:44px;top:76px;font-size:11.250px;color:#e2e2e2">Screenshot 2024-12-04 113422.ai* @ 300 % (RGB/Preview)</div>

<div class="t" style="left:1685px;top:87.500px;font-weight:bold;font-size:10px;color:#d8d8d8">Properties</div>
<div class="t" style="left:1751px;top:87.500px;color:#8f8f8f">Libraries</div>
<div class="t" style="left:1686px;top:119.500px;color:#8f8f8f">No Selection</div>
<div class="t" style="left:1686px;top:153.500px;color:#8f8f8f">Document</div>
<div class="t" style="left:1655px;top:182px;width:100px;text-align:right">Units:</div>
<div class="t w" style="left:1768px;top:182px">Inches</div>
<div class="t" style="left:1655px;top:210px;width:100px;text-align:right">Artboard:</div>
<div class="t w" style="left:1766px;top:209px">1</div>
<div class="btn" style="left:1761px;top:234px;width:115px;height:21px;line-height:22px">Edit Artboards</div>
<div class="t" style="left:1686px;top:284.500px;color:#8f8f8f">Ruler &amp; Grids</div>
<div class="t" style="left:1686px;top:322px;color:#8f8f8f">Guides</div>
<div class="t" style="left:1686px;top:360px;color:#8f8f8f">Snap Options</div>
<div class="t" style="left:1686px;top:395px;color:#8f8f8f">Preferences</div>
<div class="t" style="left:1684px;top:422px;color:#959595;font-size:10px">Keyboard Increment:</div>
<div class="t w" style="left:1788px;top:419px;font-size:9.800px">0.0139 in</div>
<div class="t" style="left:1704px;top:450px;color:#8f8f8f">Use Preview Bounds</div>
<div class="t" style="left:1704px;top:474px;color:#8f8f8f">Scale Corners</div>
<div class="t" style="left:1704px;top:498px;color:#8f8f8f">Scale Strokes &amp; Effects</div>
<div class="t" style="left:1686px;top:543px;color:#8f8f8f">Quick Actions</div>
<div class="btn" style="left:1686px;top:566px;width:116px;height:21px;line-height:21px">Document Setup</div>
<div class="btn" style="left:1812px;top:566px;width:101px;height:21px;line-height:21px">Preferences</div>
<div class="btn" style="left:1686px;top:597px;width:227px;height:21px;line-height:22px">Generate Vectors (Beta)</div>
</div></body></html>
